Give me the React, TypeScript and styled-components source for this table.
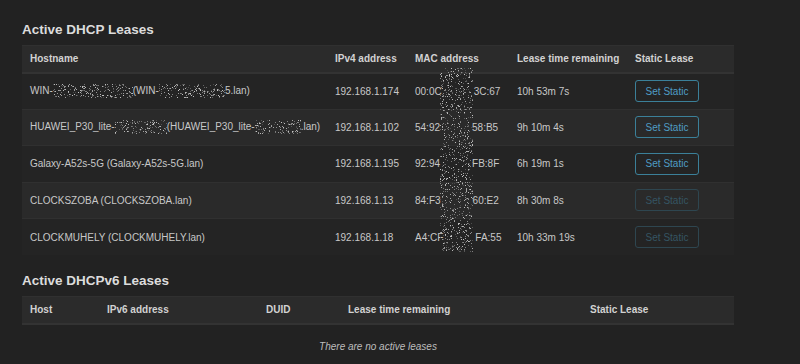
import React from "react";
import styled, { createGlobalStyle } from "styled-components";

const GlobalStyle = createGlobalStyle`
    html, body {
        margin: 0;
        padding: 0;
        background-color: #222222;
    }
    body {
        font-family: "Liberation Sans", Arial, sans-serif;
        color: #c8c8c8;
    }
`;

const Page = styled.div`
    width: 800px;
    height: 364px;
    overflow: hidden;
    padding: 22px 66px 0 22px;
    box-sizing: border-box;
    display: flex;
    flex-direction: column;
`;

const Title = styled.h3`
    margin: 0 0 7px 0;
    font-size: 13.5px;
    font-weight: bold;
    color: #dcdcdc;
    line-height: 16px;
`;

const Section = styled.section<{ $gap?: number }>`
    margin-bottom: ${(props) => props.$gap ?? 0}px;
`;

const TableWrap = styled.div`
    position: relative;
`;

const Table = styled.table`
    width: 712px;
    border-collapse: collapse;
    table-layout: fixed;
    font-size: 10px;
`;

const HeadRow = styled.tr<{ $height: number }>`
    height: ${(props) => props.$height}px;
    background-color: #2b2b2b;
    border-top: 1px solid #303030;
    border-bottom: 2px solid #333333;
`;

const Th = styled.th<{ $width: number }>`
    box-sizing: border-box;
    width: ${(props) => props.$width}px;
    padding: 0 8px;
    text-align: left;
    font-weight: bold;
    color: #d2d2d2;
    white-space: nowrap;
`;

const Row = styled.tr<{ $odd: boolean }>`
    height: 36.5px;
    background-color: ${(props) => (props.$odd ? "#242424" : "#2a2a2a")};
    border-top: 1px solid #303030;
`;

const Td = styled.td`
    box-sizing: border-box;
    padding: 0 8px;
    color: #c8c8c8;
    white-space: nowrap;
    overflow: hidden;
`;

const Empty = styled.td`
    height: 42px;
    text-align: center;
    font-style: italic;
    color: #bdbdbd;
`;

const Button = styled.button<{ $disabled: boolean }>`
    width: 64px;
    height: 22px;
    padding: 0;
    border-radius: 3px;
    background: transparent;
    font-family: inherit;
    font-size: 10px;
    border: 1px solid ${(props) => (props.$disabled ? "#2e4650" : "#3b8099")};
    color: ${(props) => (props.$disabled ? "#355563" : "#4f9dc4")};
    cursor: ${(props) => (props.$disabled ? "default" : "pointer")};
`;

const NoiseBox = styled.span<{ $w: number; $h: number }>`
    display: inline-block;
    vertical-align: middle;
    width: ${(props) => props.$w}px;
    height: ${(props) => props.$h}px;
    svg {
        display: block;
    }
`;

const Strip = styled.div`
    position: absolute;
    left: 418px;
    top: 23px;
    width: 33px;
    height: 184px;
    pointer-events: none;
`;

// 결정적 난수 (매번 같은 노이즈)
const rng = (seed: number) => {
    let s = seed;
    return () => {
        s = (s * 16807) % 2147483647;
        return (s - 1) / 2147483646;
    };
};

const Noise: React.FC<{ w: number; h: number; seed: number; density?: number }> = ({
    w,
    h,
    seed,
    density = 0.2,
}) => {
    const rand = rng(seed);
    const dots: React.ReactNode[] = [];
    const n = Math.floor(w * h * density);
    for (let i = 0; i < n; i++) {
        const x = Math.floor(rand() * w);
        const y = Math.floor(rand() * h);
        const c = Math.floor(70 + rand() * 130);
        dots.push(
            <rect key={i} x={x} y={y} width={1} height={1} fill={`rgb(${c},${c},${c})`} />
        );
    }
    return (
        <svg width={w} height={h} xmlns="http://www.w3.org/2000/svg">
            {dots}
        </svg>
    );
};

interface Lease {
    host: React.ReactNode;
    ip: string;
    macA: string;
    macB: string;
    time: string;
    disabled: boolean;
}

const leases: Lease[] = [
    {
        host: (
            <>
                WIN-
                <NoiseBox $w={80} $h={14}>
                    <Noise w={80} h={14} seed={11} />
                </NoiseBox>
                (WIN-
                <NoiseBox $w={66} $h={14}>
                    <Noise w={66} h={14} seed={23} />
                </NoiseBox>
                5.lan)
            </>
        ),
        ip: "192.168.1.174",
        macA: "00:0C",
        macB: "3C:67",
        time: "10h 53m 7s",
        disabled: false,
    },
    {
        host: (
            <>
                HUAWEI_P30_lite-
                <NoiseBox $w={52} $h={14}>
                    <Noise w={52} h={14} seed={37} />
                </NoiseBox>
                (HUAWEI_P30_lite-
                <NoiseBox $w={46} $h={14}>
                    <Noise w={46} h={14} seed={41} />
                </NoiseBox>
                .lan)
            </>
        ),
        ip: "192.168.1.102",
        macA: "54:92",
        macB: "58:B5",
        time: "9h 10m 4s",
        disabled: false,
    },
    {
        host: "Galaxy-A52s-5G (Galaxy-A52s-5G.lan)",
        ip: "192.168.1.195",
        macA: "92:94",
        macB: "FB:8F",
        time: "6h 19m 1s",
        disabled: false,
    },
    {
        host: "CLOCKSZOBA (CLOCKSZOBA.lan)",
        ip: "192.168.1.13",
        macA: "84:F3",
        macB: "60:E2",
        time: "8h 30m 8s",
        disabled: true,
    },
    {
        host: "CLOCKMUHELY (CLOCKMUHELY.lan)",
        ip: "192.168.1.18",
        macA: "A4:CF",
        macB: "FA:55",
        time: "10h 33m 19s",
        disabled: true,
    },
];

const MacGap = styled.span`
    display: inline-block;
    width: 32px;
`;

const App: React.FC = () => {
    return (
        <>
            <GlobalStyle />
            <Page>
                <Section $gap={18}>
                    <Title>Active DHCP Leases</Title>
                    <TableWrap>
                        <Table>
                            <thead>
                                <HeadRow $height={27}>
                                    <Th $width={305}>Hostname</Th>
                                    <Th $width={80}>IPv4 address</Th>
                                    <Th $width={102}>MAC address</Th>
                                    <Th $width={118}>Lease time remaining</Th>
                                    <Th $width={107}>Static Lease</Th>
                                </HeadRow>
                            </thead>
                            <tbody>
                                {leases.map((l, i) => (
                                    <Row key={l.ip} $odd={i % 2 === 0}>
                                        <Td>{l.host}</Td>
                                        <Td>{l.ip}</Td>
                                        <Td>
                                            {l.macA}
                                            <MacGap />
                                            {l.macB}
                                        </Td>
                                        <Td>{l.time}</Td>
                                        <Td>
                                            <Button $disabled={l.disabled} disabled={l.disabled}>
                                                Set Static
                                            </Button>
                                        </Td>
                                    </Row>
                                ))}
                            </tbody>
                        </Table>
                        <Strip>
                            <Noise w={33} h={184} seed={97} density={0.16} />
                        </Strip>
                    </TableWrap>
                </Section>
                <Section>
                    <Title>Active DHCPv6 Leases</Title>
                    <Table>
                        <thead>
                            <HeadRow $height={27}>
                                <Th $width={77}>Host</Th>
                                <Th $width={159}>IPv6 address</Th>
                                <Th $width={82}>DUID</Th>
                                <Th $width={242}>Lease time remaining</Th>
                                <Th $width={152}>Static Lease</Th>
                            </HeadRow>
                        </thead>
                        <tbody>
                            <tr>
                                <Empty colSpan={5}>There are no active leases</Empty>
                            </tr>
                        </tbody>
                    </Table>
                </Section>
            </Page>
        </>
    );
};

export default App;
